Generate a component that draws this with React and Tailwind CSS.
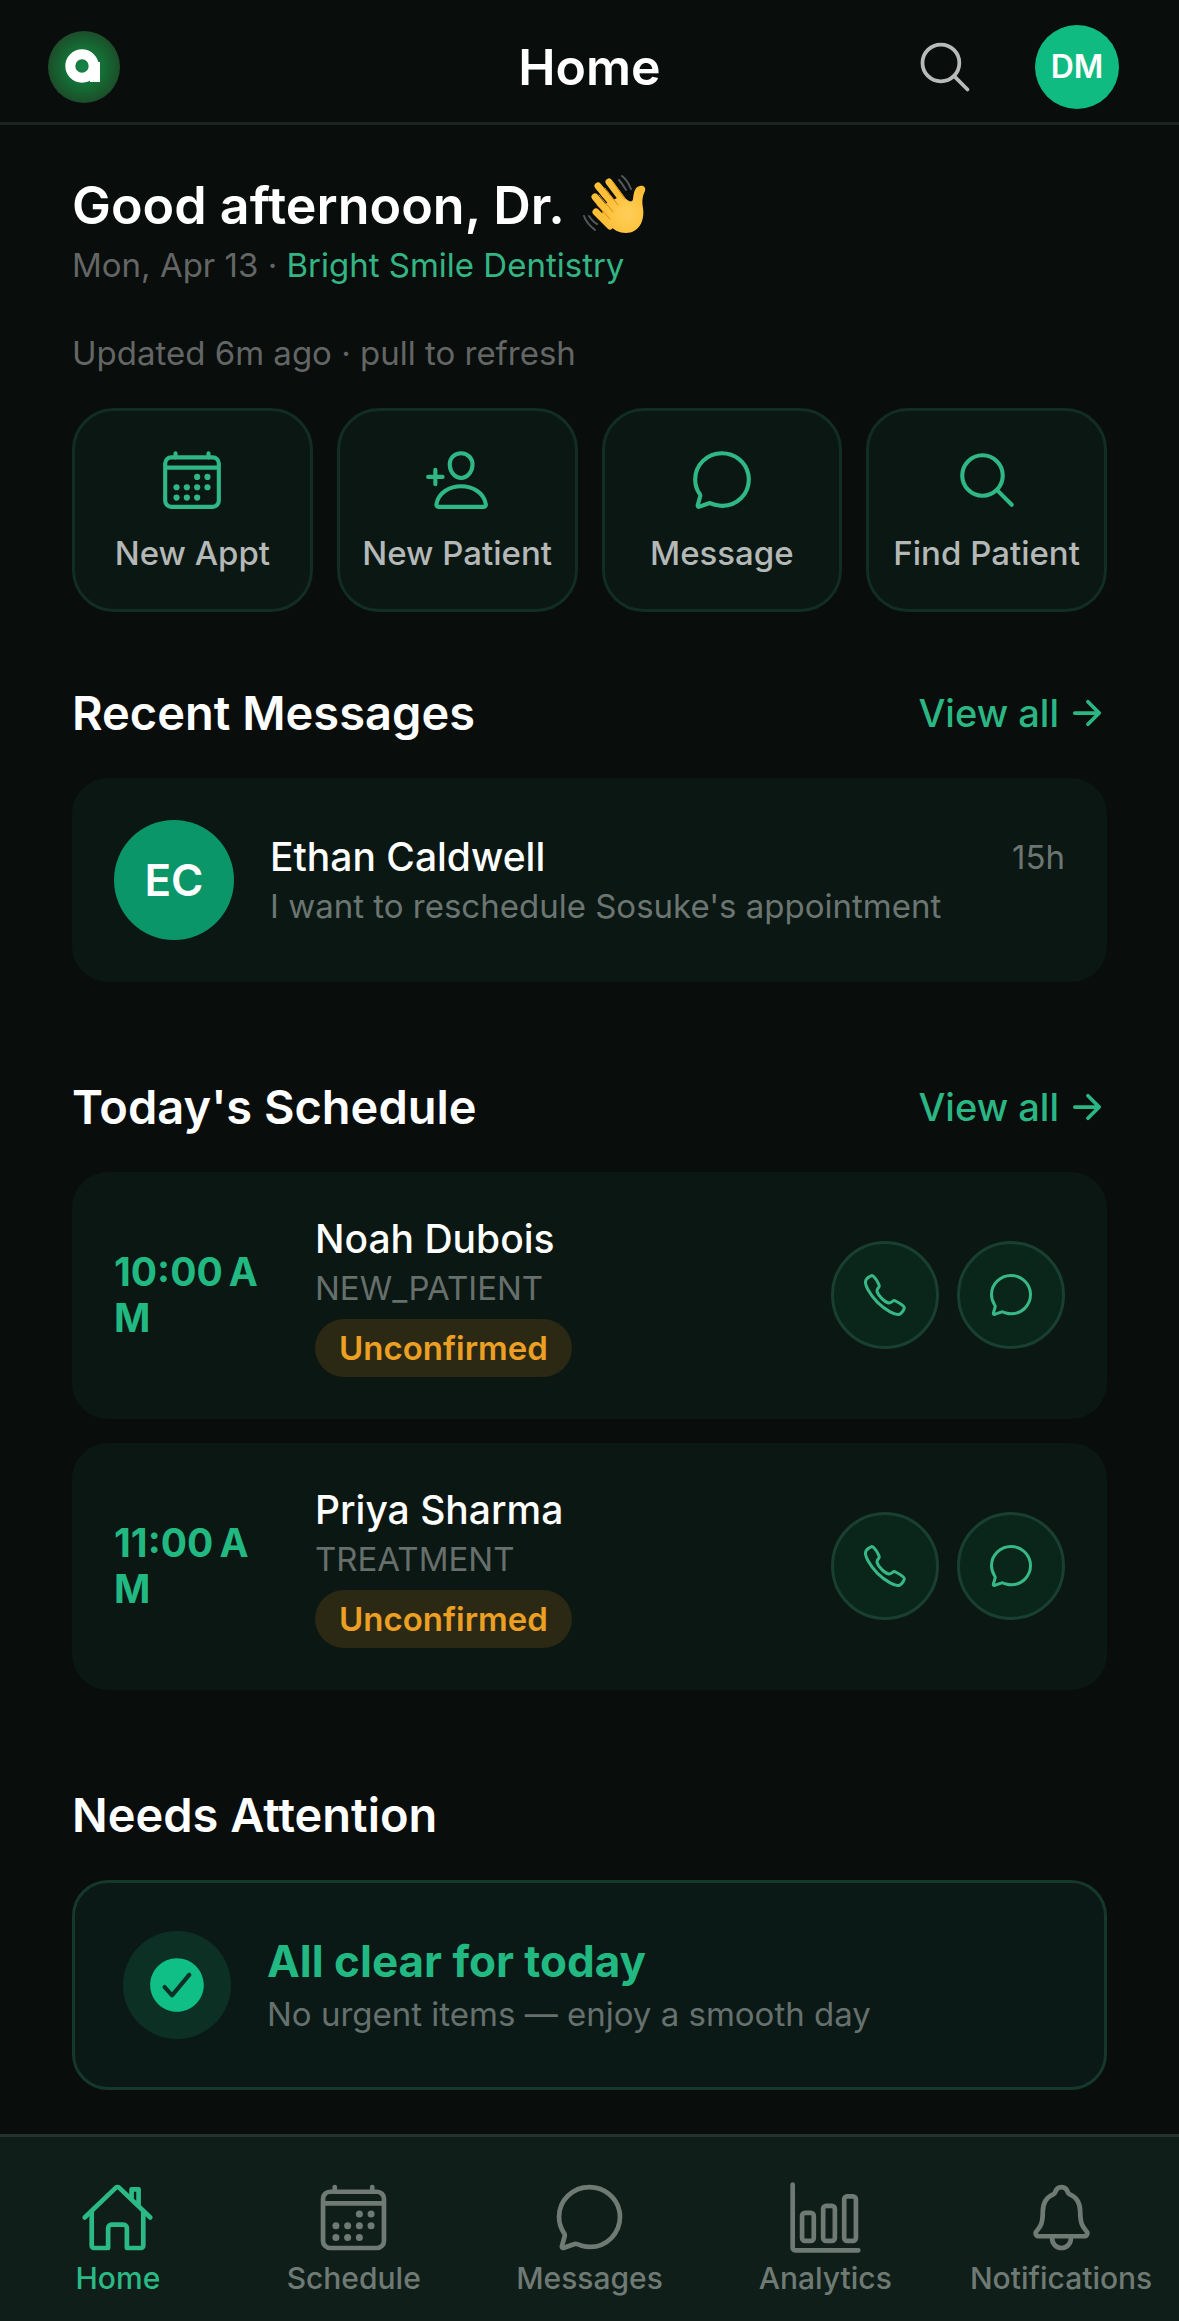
import {
  IoArrowForward,
  IoBarChartOutline,
  IoCalendarOutline,
  IoCallOutline,
  IoChatbubbleOutline,
  IoCheckmarkCircle,
  IoHomeOutline,
  IoNotificationsOutline,
  IoPersonAddOutline,
  IoSearchOutline,
} from 'react-icons/io5';

const quickActions = [
  { label: 'New Appt', icon: IoCalendarOutline },
  { label: 'New Patient', icon: IoPersonAddOutline },
  { label: 'Message', icon: IoChatbubbleOutline },
  { label: 'Find Patient', icon: IoSearchOutline },
];

const messages = [
  {
    id: 1,
    name: 'Ethan Caldwell',
    initials: 'EC',
    preview: "I want to reschedule Sosuke's appointment",
    age: '15h',
  },
];

const appointments = [
  { id: 1, time: '10:00\u202fAM', name: 'Noah Dubois', type: 'NEW_PATIENT', status: 'Unconfirmed' },
  { id: 2, time: '11:00\u202fAM', name: 'Priya Sharma', type: 'TREATMENT', status: 'Unconfirmed' },
];

const tabs = [
  { label: 'Home', icon: IoHomeOutline, active: true },
  { label: 'Schedule', icon: IoCalendarOutline },
  { label: 'Messages', icon: IoChatbubbleOutline },
  { label: 'Analytics', icon: IoBarChartOutline },
  { label: 'Notifications', icon: IoNotificationsOutline },
];

function Logo() {
  return (
    <svg viewBox="0 0 72 72" className="size-18" role="img" aria-label="Logo">
      <defs>
        <radialGradient id="logo-glow">
          <stop offset="0" stopColor="#17854a" />
          <stop offset="0.6" stopColor="#156a33" />
          <stop offset="1" stopColor="#1c4d2a" />
        </radialGradient>
      </defs>
      <circle cx="36" cy="36" r="36" fill="url(#logo-glow)" />
      <ellipse cx="34" cy="35" rx="11.7" ry="11.7" fill="none" stroke="#fff" strokeWidth="10" />
      <rect x="42" y="31" width="10" height="20" fill="#fff" />
    </svg>
  );
}

function WavingHand() {
  return (
    <svg viewBox="0 0 64 64" className="size-16" role="img" aria-label="Waving hand">
      <defs>
        <radialGradient id="hand-skin" cx="0.6" cy="0.6" r="0.6">
          <stop offset="0" stopColor="#ffcf58" />
          <stop offset="1" stopColor="#fdbd35" />
        </radialGradient>
      </defs>
      <g stroke="#fdbf38" strokeWidth="7" strokeLinecap="round">
        <path d="M26 8l15 20" />
        <path d="M15 12l19 23" />
        <path d="M12 23l17 20" />
        <path d="M13 38l14 14" />
      </g>
      <path
        d="M22 30L38 22l8 5c2 1 4 0 4-2 1-8 2-12 7-13 4-1 6 2 5 5-3 6-3 11-2 17 2 14-5 25-17 25-7 0-12-3-17-8l-8-8z"
        fill="url(#hand-skin)"
      />
      <g fill="none" stroke="#d98e12" strokeWidth="1" strokeLinecap="round">
        <path d="M22 14l13 17M16 21l14 17M14 31l13 14M30 8l12 17" />
      </g>
      <g fill="none" stroke="#55585a" strokeWidth="2" strokeLinecap="round">
        <path d="M39 2c4 3 7 8 9 13M36 6c3 3 5 7 7 10M1 42c2 6 6 10 11 14M6 42c2 3 4 6 8 8" />
      </g>
    </svg>
  );
}

function SectionHeader({ title, link }) {
  return (
    <div className="flex items-center justify-between">
      <h2 className="text-[47px] leading-[58px] font-semibold">{title}</h2>
      {link && (
        <a href="#" className="flex items-center gap-2 text-[38px] leading-[48px] font-medium text-[#2bb784]">
          View all
          <IoArrowForward className="size-10" />
        </a>
      )}
    </div>
  );
}

function MessageCard({ message }) {
  return (
    <article className="flex items-center gap-9 rounded-[36px] bg-[#0b1713] p-[42px]">
      <div className="flex size-30 shrink-0 items-center justify-center rounded-full bg-[#0b9669] text-[44px] font-semibold">
        {message.initials}
      </div>
      <div className="min-w-0 grow">
        <div className="flex items-center justify-between">
          <h3 className="text-[39px] leading-[52px] font-medium">{message.name}</h3>
          <span className="text-[33px] leading-[48px] text-[#6b7571]">{message.age}</span>
        </div>
        <p className="truncate text-[33px] leading-[46px] text-[#6b7571]">{message.preview}</p>
      </div>
    </article>
  );
}

function RoundButton({ label, icon: Icon }) {
  return (
    <button
      type="button"
      aria-label={label}
      className="flex size-27 items-center justify-center rounded-full border-3 border-[#193f30] bg-[#0a261b] text-[#38b888]"
    >
      <Icon className="size-12" />
    </button>
  );
}

function AppointmentCard({ appointment }) {
  return (
    <article className="flex items-center rounded-[36px] bg-[#0b1713] px-[42px] pt-[41px] pb-[42px]">
      <time className="mr-[51px] w-[150px] shrink-0 text-[39px] leading-[46px] font-bold break-all text-[#22b882]">
        {appointment.time}
      </time>
      <div className="min-w-0 grow">
        <h3 className="text-[39px] leading-[52px] font-medium">{appointment.name}</h3>
        <p className="text-[33px] leading-[46px] text-[#666f6b]">{appointment.type}</p>
        <p className="mt-2 w-fit rounded-full bg-[#2b2814] px-6 py-2 text-[33px] leading-[42px] font-semibold text-[#eba024]">
          {appointment.status}
        </p>
      </div>
      <div className="flex gap-[18px]">
        <RoundButton label={`Call ${appointment.name}`} icon={IoCallOutline} />
        <RoundButton label={`Message ${appointment.name}`} icon={IoChatbubbleOutline} />
      </div>
    </article>
  );
}

export default function App() {
  return (
    <div className="flex min-h-screen flex-col bg-[#090d0c] font-['Inter',sans-serif] text-white">
      <header className="grid grid-cols-3 items-center border-b-3 border-[#1c2220] px-12 pt-[25px] pb-[13px]">
        <Logo />
        <h1 className="text-center text-[50px] leading-[60px] font-semibold">Home</h1>
        <div className="flex items-center justify-end gap-15 pr-3">
          <button type="button" aria-label="Search" className="text-[#b9bbba]">
            <IoSearchOutline className="size-15" />
          </button>
          <button
            type="button"
            className="flex size-21 items-center justify-center rounded-full bg-[#10bb82] text-[32px] font-semibold"
          >
            DM
          </button>
        </div>
      </header>

      <main className="grow px-18 pt-[46px] pb-[43px]">
        <div className="flex items-center gap-[18px]">
          <p className="text-[52px] leading-[70px] font-semibold">Good afternoon, Dr.</p>
          <WavingHand />
        </div>
        <p className="text-[33px] leading-[48px] text-[#636665]">
          Mon, Apr 13 · <span className="text-[#34b584]">Bright Smile Dentistry</span>
        </p>
        <p className="mt-10 text-[33px] leading-[48px] text-[#636665]">Updated 6m ago · pull to refresh</p>

        <div className="mt-[31px] grid grid-cols-4 gap-6">
          {quickActions.map(({ label, icon: Icon }) => (
            <button
              key={label}
              type="button"
              className="flex flex-col items-center gap-[18px] rounded-[42px] border-3 border-[#122d23] bg-[#0b1713] pt-9 pb-[34px]"
            >
              <Icon className="size-[66px] text-[#2fb886]" />
              <span className="text-[33px] leading-[44px] font-medium whitespace-nowrap text-[#b4b8b6]">{label}</span>
            </button>
          ))}
        </div>

        <section className="mt-18">
          <SectionHeader title="Recent Messages" link />
          <div className="mt-9 flex flex-col gap-6">
            {messages.map((message) => (
              <MessageCard key={message.id} message={message} />
            ))}
          </div>
        </section>

        <section className="mt-24">
          <SectionHeader title="Today's Schedule" link />
          <div className="mt-9 flex flex-col gap-6">
            {appointments.map((appointment) => (
              <AppointmentCard key={appointment.id} appointment={appointment} />
            ))}
          </div>
        </section>

        <section className="mt-24">
          <SectionHeader title="Needs Attention" />
          <div className="mt-9 flex items-center gap-9 rounded-[36px] border-3 border-[#15382a] bg-[#0a1916] p-12">
            <div className="flex size-27 shrink-0 items-center justify-center rounded-full bg-[#0c3024]">
              <IoCheckmarkCircle className="size-[66px] text-[#10bf85]" />
            </div>
            <div>
              <h3 className="text-[44px] leading-[58px] font-bold text-[#22b882]">All clear for today</h3>
              <p className="text-[33px] leading-[48px] text-[#66706d]">No urgent items — enjoy a smooth day</p>
            </div>
          </div>
        </section>
      </main>

      <nav className="grid grid-cols-5 border-t-3 border-[#26332d] bg-[#0f1e18] pt-[43px] pb-6">
        {tabs.map(({ label, icon: Icon, active }) => (
          <a
            key={label}
            href="#"
            className={`flex flex-col items-center gap-1 text-[30px] leading-[38px] font-medium ${
              active ? 'text-[#2bb985]' : 'text-[#6f7a75]'
            }`}
          >
            <Icon className="size-[75px]" />
            {label}
          </a>
        ))}
      </nav>
    </div>
  );
}
